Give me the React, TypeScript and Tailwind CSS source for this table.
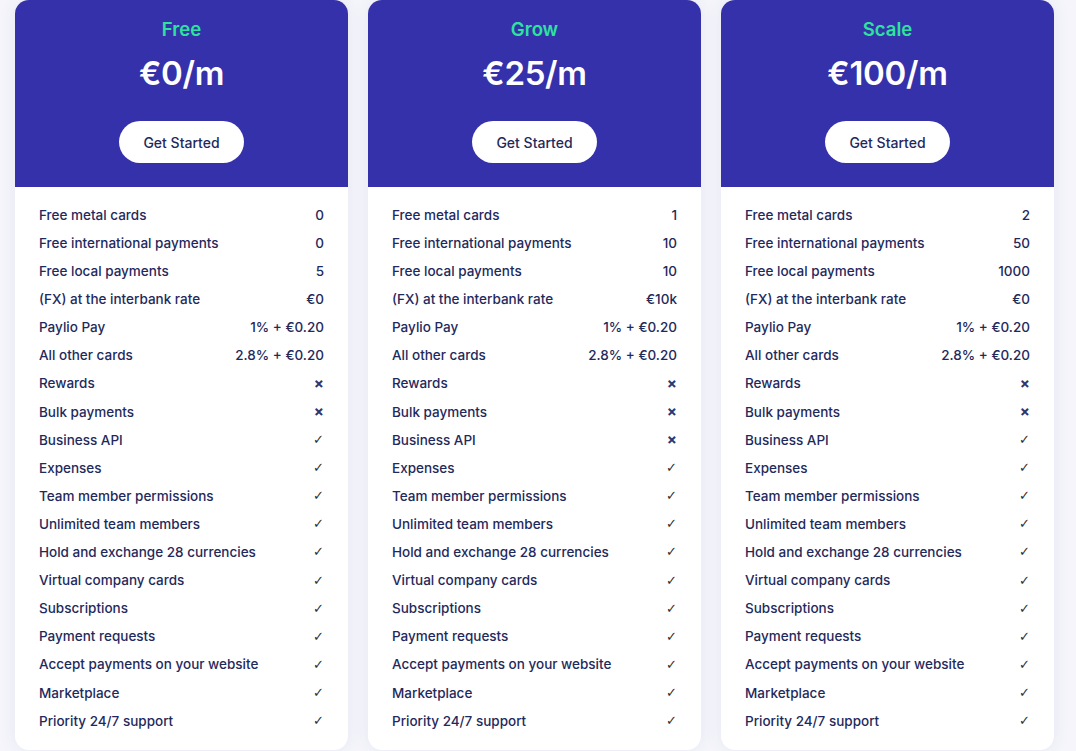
import React from 'react';

type Plan = {
  name: string;
  price: string;
  values: string[];
};

const features = [
  'Free metal cards',
  'Free international payments',
  'Free local payments',
  '(FX) at the interbank rate',
  'Paylio Pay',
  'All other cards',
  'Rewards',
  'Bulk payments',
  'Business API',
  'Expenses',
  'Team member permissions',
  'Unlimited team members',
  'Hold and exchange 28 currencies',
  'Virtual company cards',
  'Subscriptions',
  'Payment requests',
  'Accept payments on your website',
  'Marketplace',
  'Priority 24/7 support',
];

const tail = ['✓', '✓', '✓', '✓', '✓', '✓', '✓', '✓', '✓', '✓'];

const plans: Plan[] = [
  {
    name: 'Free',
    price: '€0/m',
    values: ['0', '0', '5', '€0', '1% + €0.20', '2.8% + €0.20', '×', '×', '✓', ...tail],
  },
  {
    name: 'Grow',
    price: '€25/m',
    values: ['1', '10', '10', '€10k', '1% + €0.20', '2.8% + €0.20', '×', '×', '×', ...tail],
  },
  {
    name: 'Scale',
    price: '€100/m',
    values: ['2', '50', '1000', '€0', '1% + €0.20', '2.8% + €0.20', '×', '×', '✓', ...tail],
  },
];

const Value = ({ v }: { v: string }) => {
  if (v === '✓') {
    return <span className="text-[13px] text-[#2f2f2f] font-['DejaVu_Sans',sans-serif]">✓</span>;
  }
  if (v === '×') {
    return <span className="text-[15px] font-bold text-[#2c3670] leading-none">×</span>;
  }
  return <span>{v}</span>;
};

const PlanCard = ({ plan }: { plan: Plan }) => (
  <div className="w-[333px] shrink-0 rounded-[14px] bg-white shadow-[0_0_18px_rgba(60,60,140,0.08)] overflow-hidden">
    <div className="h-[187px] bg-[#3531ab] flex flex-col items-center pt-[17px]">
      <h3 className="text-[18.5px] font-semibold text-[#2ee39e] leading-[24px]">{plan.name}</h3>
      <div className="mt-[12px] text-[33px] font-semibold text-white leading-[40px] tracking-[-0.3px]">{plan.price}</div>
      <button className="mt-[28px] w-[125px] h-[42px] rounded-full bg-white text-[#1f2a5c] text-[14px] font-medium">
        Get Started
      </button>
    </div>
    <ul className="px-[24px] pt-[14px] pb-[15px] text-[13.5px] font-medium text-[#1f2a5c]">
      {features.map((f, i) => (
        <li key={f} className="h-[28.1px] flex items-center justify-between">
          <span>{f}</span>
          <Value v={plan.values[i]} />
        </li>
      ))}
    </ul>
  </div>
);

export default function App() {
  return (
    <div className="min-h-[751px] h-[751px] overflow-hidden bg-[#f5f5fb] font-['Inter',sans-serif]">
      <div className="flex gap-[20px] pl-[15px]">
        {plans.map(p => (
          <PlanCard key={p.name} plan={p} />
        ))}
      </div>
    </div>
  );
}
